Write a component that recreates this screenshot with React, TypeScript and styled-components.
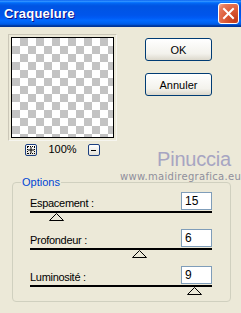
import React from "react";
import styled, { createGlobalStyle } from "styled-components";

const GlobalStyle = createGlobalStyle`
  * {
    box-sizing: border-box;
    margin: 0;
    padding: 0;
  }
  body {
    margin: 0;
    background: #ece9d8;
    font-family: "Liberation Sans", Arial, sans-serif;
  }
`;

const Window = styled.div`
  position: relative;
  width: 241px;
  height: 313px;
  overflow: hidden;
  background: #ece9d8;
`;

const TitleBar = styled.div`
  height: 27px;
  display: flex;
  align-items: center;
  justify-content: space-between;
  padding: 0 2px 1px 4px;
  background: linear-gradient(
    180deg,
    #0058ee 0%,
    #3593ff 4%,
    #288eff 6%,
    #127dff 8%,
    #036ffc 10%,
    #0262ee 14%,
    #0057e5 20%,
    #0054e3 24%,
    #0055eb 56%,
    #005bf5 66%,
    #026afe 76%,
    #0062ef 86%,
    #0052d6 92%,
    #0040ab 94%,
    #003092 100%
  );
`;

const Title = styled.span`
  color: #fff;
  font-weight: bold;
  font-size: 13px;
  letter-spacing: 0.2px;
  text-shadow: 1px 1px #0f1089;
`;

const CloseButton = styled.div`
  width: 21px;
  height: 21px;
  display: flex;
  align-items: center;
  justify-content: center;
  border: 1px solid #fff;
  border-radius: 3px;
  background: radial-gradient(
    circle at 85% 85%,
    #c23a1a 0%,
    #db5a36 45%,
    #e77a5c 80%,
    #f3b29c 100%
  );
`;

const Body = styled.div`
  display: flex;
  gap: 28px;
  padding: 7px 0 0 8px;
`;

const LeftColumn = styled.div`
  display: flex;
  flex-direction: column;
  align-items: center;
`;

const PreviewFrame = styled.div`
  padding: 2px;
  border: 1px solid #cbc7b8;
  border-right-color: #f6f5ef;
  border-bottom-color: #f6f5ef;
`;

const Preview = styled.div`
  width: 103px;
  height: 101px;
  border: 1px solid #000;
  background-color: #fff;
  background-image: conic-gradient(
    #c3c3c3 25%,
    #fff 0 50%,
    #c3c3c3 0 75%,
    #fff 0
  );
  background-size: 16px 16px;
`;

const ZoomRow = styled.div`
  display: flex;
  align-items: center;
  gap: 11px;
  margin-top: 3px;
  height: 12px;
`;

const ZoomButton = styled.div<{ $focused?: boolean }>`
  width: 12px;
  height: 12px;
  display: flex;
  align-items: center;
  justify-content: center;
  border: 1px solid #1c3f80;
  border-radius: 2px;
  background: linear-gradient(180deg, #fff, #e3e1d8);
  outline: ${(p) => (p.$focused ? "1px dotted #000" : "none")};
  outline-offset: -3px;
`;

const ZoomText = styled.span`
  font-size: 11px;
  color: #000;
  padding-bottom: 3px;
`;

const RightColumn = styled.div`
  display: flex;
  flex-direction: column;
  gap: 12px;
  padding-top: 4px;
`;

const Button = styled.button`
  width: 67px;
  height: 23px;
  border: 1px solid #003c74;
  border-radius: 3px;
  background: linear-gradient(180deg, #fff 0%, #f3f2ec 70%, #dcd8cc 100%);
  font-family: "Liberation Sans", Arial, sans-serif;
  font-size: 11px;
  color: #000;
`;

const Watermark = styled.div`
  position: absolute;
  left: 120px;
  top: 147px;
  display: flex;
  flex-direction: column;
  align-items: flex-start;
  pointer-events: none;
`;

const WatermarkName = styled.span`
  margin-left: 37px;
  font-family: "Liberation Sans", Arial, sans-serif;
  font-size: 20px;
  letter-spacing: -0.2px;
  line-height: 24px;
  color: #a7a5c2;
`;

const WatermarkUrl = styled.span`
  font-family: "DejaVu Sans", sans-serif;
  font-size: 10px;
  letter-spacing: 0.3px;
  white-space: nowrap;
  color: #8f8f9c;
`;

const GroupBox = styled.fieldset`
  margin: 20px 0 0 12px;
  width: 219px;
  height: 126px;
  border: 1px solid #d0d0bf;
  border-radius: 4px;
  padding: 4px 18px 0 17px;
`;

const Legend = styled.legend`
  margin-left: -9px;
  padding: 0 1px;
  font-size: 11px;
  color: #0046d5;
`;

const SliderRow = styled.div`
  display: flex;
  flex-direction: column;
  margin-bottom: 8px;
`;

const FieldLine = styled.div`
  display: flex;
  align-items: center;
  justify-content: space-between;
  height: 18px;
`;

const Label = styled.span`
  font-size: 11px;
  letter-spacing: -0.3px;
  color: #000;
  padding-top: 3px;
`;

const ValueBox = styled.div`
  width: 31px;
  height: 18px;
  border: 1px solid #7f9db9;
  background: #fff;
  padding: 1px 0 0 3px;
  font-size: 12px;
  color: #000;
`;

const Track = styled.div`
  margin-top: 1px;
  height: 2px;
  background: #000;
`;

const ThumbArea = styled.div`
  position: relative;
  height: 8px;
`;

const Thumb = styled.svg`
  position: absolute;
  top: 0;
  display: block;
`;

const sliders = [
  { label: "Espacement :", value: 15, min: 1, max: 100 },
  { label: "Profondeur :", value: 6, min: 0, max: 10 },
  { label: "Luminosité :", value: 9, min: 0, max: 10 },
];

export default function App() {
  return (
    <Window>
      <GlobalStyle />
      <TitleBar>
        <Title>Craquelure</Title>
        <CloseButton>
          <svg width="13" height="13" viewBox="0 0 13 13">
            <path
              d="M2 2 L11 11 M11 2 L2 11"
              stroke="#fff"
              strokeWidth="2"
              strokeLinecap="square"
            />
          </svg>
        </CloseButton>
      </TitleBar>

      <Body>
        <LeftColumn>
          <PreviewFrame>
            <Preview />
          </PreviewFrame>
          <ZoomRow>
            <ZoomButton $focused>
              <svg width="6" height="6" viewBox="0 0 6 6">
                <path d="M0 3 H6 M3 0 V6" stroke="#000" strokeWidth="1" />
              </svg>
            </ZoomButton>
            <ZoomText>100%</ZoomText>
            <ZoomButton>
              <svg width="6" height="6" viewBox="0 0 6 6">
                <path d="M0 3.5 H5" stroke="#000" strokeWidth="1" />
              </svg>
            </ZoomButton>
          </ZoomRow>
        </LeftColumn>
        <RightColumn>
          <Button>OK</Button>
          <Button>Annuler</Button>
        </RightColumn>
      </Body>

      <Watermark>
        <WatermarkName>Pinuccia</WatermarkName>
        <WatermarkUrl>www.maidiregrafica.eu</WatermarkUrl>
      </Watermark>

      <GroupBox>
        <Legend>Options</Legend>
        {sliders.map((s) => {
          const pct = ((s.value - s.min) / (s.max - s.min)) * 100;
          return (
            <SliderRow key={s.label}>
              <FieldLine>
                <Label>{s.label}</Label>
                <ValueBox>{s.value}</ValueBox>
              </FieldLine>
              <Track />
              <ThumbArea>
                <Thumb
                  width="15"
                  height="8"
                  viewBox="0 0 15 8"
                  style={{ left: `calc(${pct}% - 7px)` }}
                >
                  <polygon
                    points="0.5,7.5 7.5,0.5 14.5,7.5"
                    fill="#ece9d8"
                    stroke="#000"
                  />
                </Thumb>
              </ThumbArea>
            </SliderRow>
          );
        })}
      </GroupBox>
    </Window>
  );
}
